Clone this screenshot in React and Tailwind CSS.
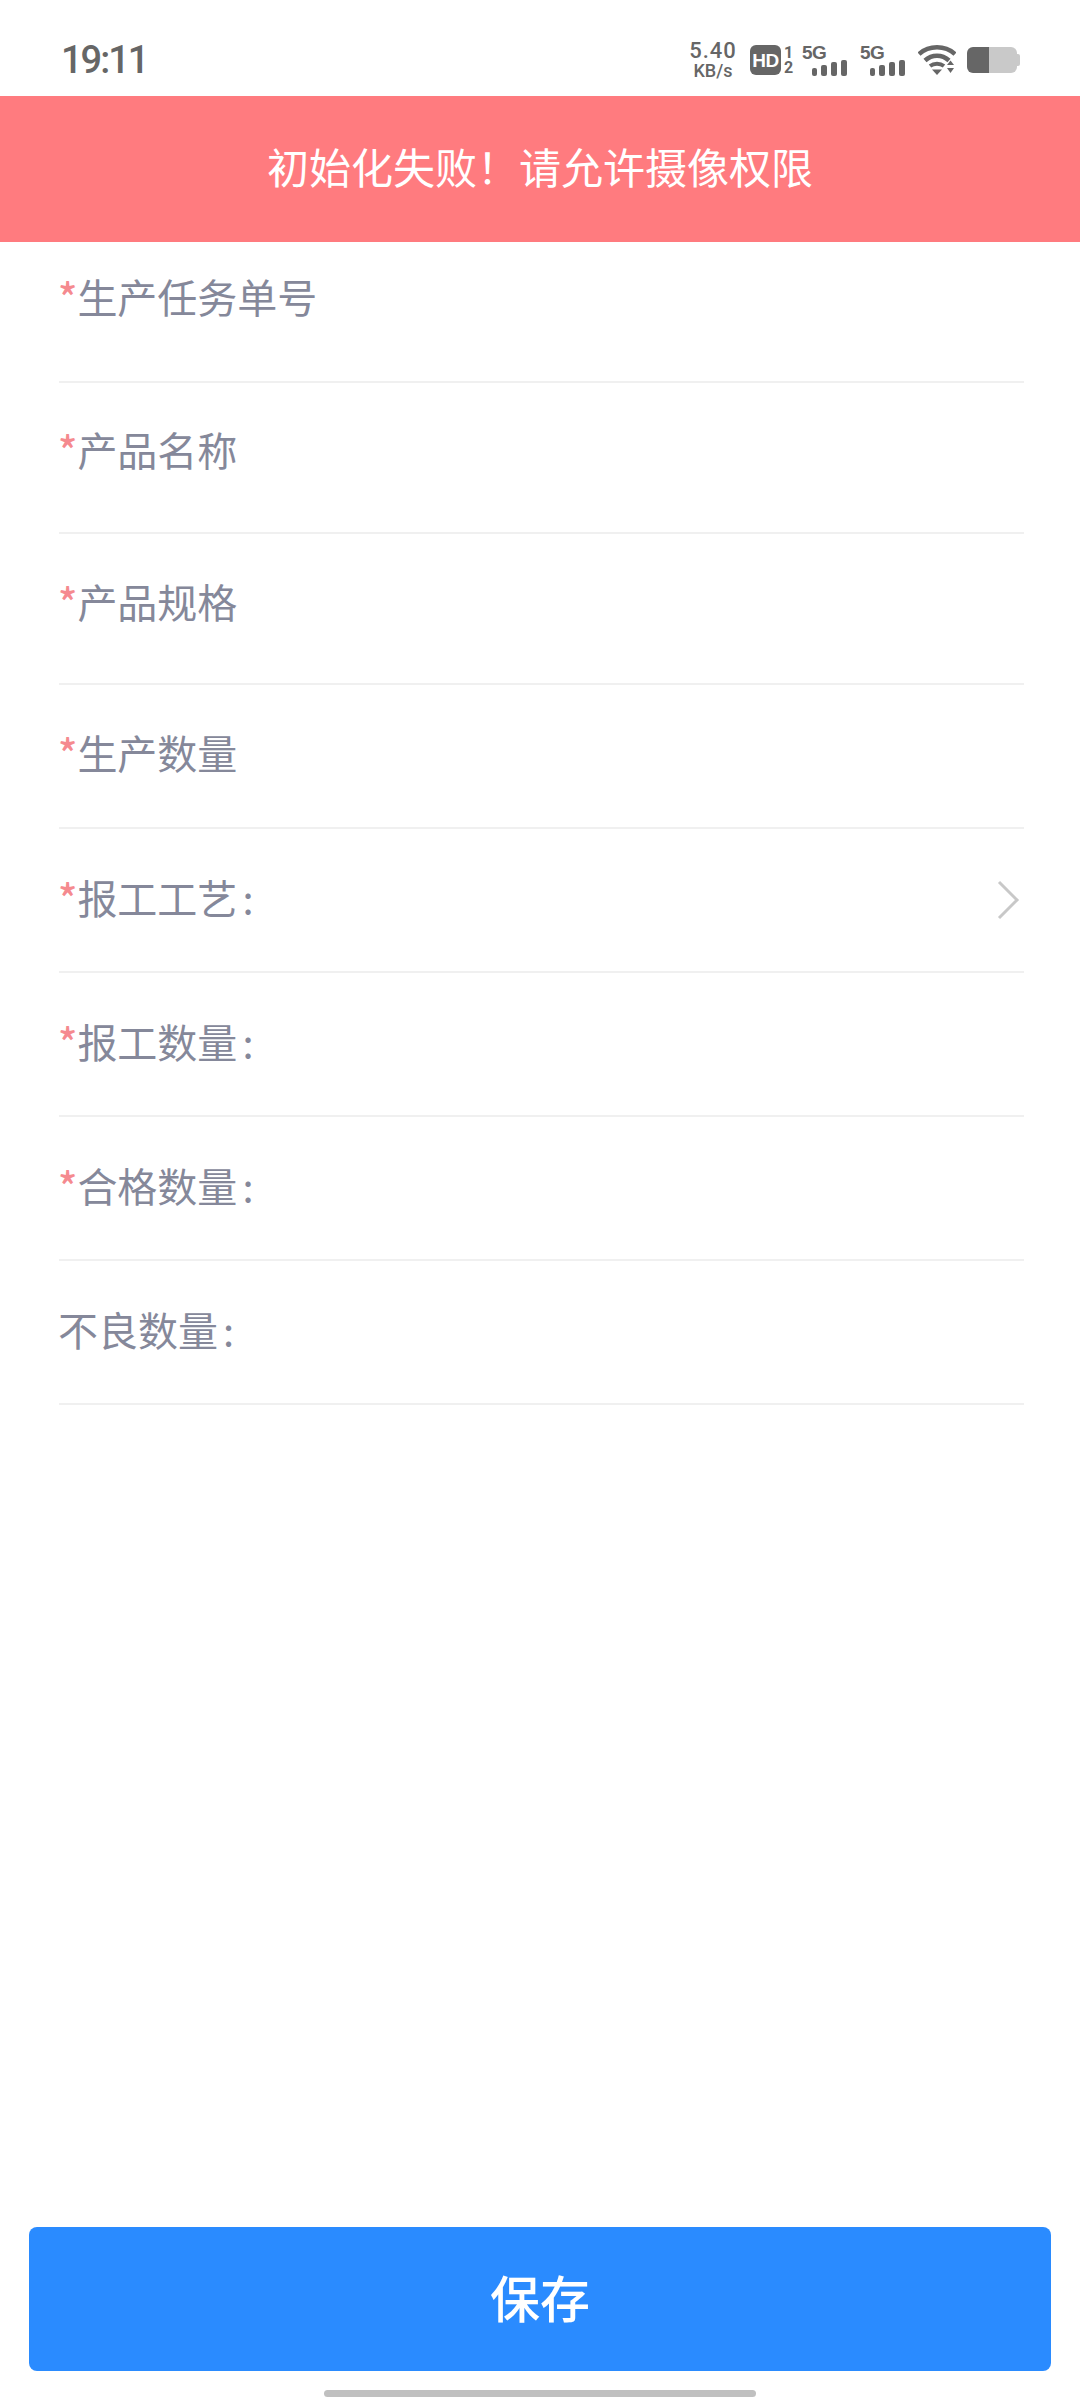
const cjk = "font-['Noto_Sans_CJK_SC',sans-serif]"

const rows = [
  { label: '生产任务单号', required: true, box: 'h-[141px] pb-[31px]' },
  { label: '产品名称', required: true, box: 'h-[151px] pb-[18px]' },
  { label: '产品规格', required: true, box: 'h-[151px] pb-[16px]' },
  { label: '生产数量', required: true, box: 'h-[144px] pb-[8px]' },
  { label: '报工工艺', colon: true, required: true, box: 'h-[144px] pb-[6px]', arrow: true },
  { label: '报工数量', colon: true, required: true, box: 'h-[144px] pb-[6px]' },
  { label: '合格数量', colon: true, required: true, box: 'h-[144px] pb-[6px]' },
  { label: '不良数量', colon: true, required: false, box: 'h-[144px] pb-[6px]' },
]

function Signal() {
  return (
    <div className="flex flex-col w-[45px]">
      <span className="font-['Liberation_Sans',sans-serif] font-bold text-[19px] leading-[15px] text-[#666666] tracking-[-0.5px]">5G</span>
      <div className="flex items-end gap-[4px] h-[16px] pl-[10px]">
        <div className="w-[5px] h-[8px] rounded-[2px] bg-[#666666]" />
        <div className="w-[6px] h-[11px] rounded-[2px] bg-[#666666]" />
        <div className="w-[6px] h-[14px] rounded-[2px] bg-[#666666]" />
        <div className="w-[6px] h-[16px] rounded-[2px] bg-[#666666]" />
      </div>
    </div>
  )
}

function Wifi() {
  return (
    <svg width="38" height="30" viewBox="0 0 38 30" fill="none">
      <path d="M1 9 C11 0 27 0 37 9" stroke="#666666" strokeWidth="4.5" />
      <path d="M7 15.5 C14 9 24 9 31 15.5" stroke="#666666" strokeWidth="4.5" />
      <path d="M12 21 C16 18 22 18 26 21" stroke="#666666" strokeWidth="4" />
      <path d="M14 24.5 H24 L19 30 Z" fill="#666666" />
      <path d="M29 20 L32.5 15.5 L36 20 Z" fill="#666666" />
      <path d="M29 23 H36 L32.5 28 Z" fill="#666666" />
    </svg>
  )
}

function Battery() {
  return (
    <div className="flex items-center">
      <div className="flex h-[26px] w-[50px] rounded-[6px] overflow-hidden">
        <div className="w-[22px] bg-[#666666]" />
        <div className="flex-1 bg-[#c9c9c9]" />
      </div>
      <div className="w-[3px] h-[12px] rounded-r-[2px] bg-[#c9c9c9]" />
    </div>
  )
}

function StatusBar() {
  return (
    <div className="h-[96px] flex items-center justify-between pl-[61px] pr-[60px] pt-[24px]">
      <span className="font-['Roboto',sans-serif] font-medium text-[38px] leading-none tracking-[-2px] text-[#666666]">19:11</span>
      <div className="flex items-center">
        <div className="flex flex-col items-center w-[50px] font-['Roboto',sans-serif] font-medium text-[#666666]">
          <span className="text-[22px] leading-[22px] tracking-[1px]">5.40</span>
          <span className="text-[18px] leading-[18px]">KB/s</span>
        </div>
        <div className="ml-[12px] flex h-[30px] w-[31px] items-center justify-center rounded-[6px] bg-[#666666] font-['Liberation_Sans',sans-serif] font-bold text-[19px] leading-none tracking-[-0.5px] text-white">HD</div>
        <div className="ml-[2px] flex flex-col items-center w-[11px] font-['Roboto',sans-serif] font-bold text-[#666666] text-[16px] leading-[15px]">
          <span>1</span>
          <span>2</span>
        </div>
        <div className="ml-[8px]"><Signal /></div>
        <div className="ml-[13px]"><Signal /></div>
        <div className="ml-[13px]"><Wifi /></div>
        <div className="ml-[11px]"><Battery /></div>
      </div>
    </div>
  )
}

export default function App() {
  return (
    <div className={`${cjk} flex flex-col h-[2400px] w-[1080px] bg-white`}>
      <StatusBar />
      <div className="h-[146px] flex items-center justify-center pb-[7px] bg-[#ff7b7f] text-white text-[42px]">
        初始化失败！请允许摄像权限
      </div>
      <div className="pl-[59px] pr-[56px]">
        {rows.map(r => (
          <div key={r.label} className={`${r.box} flex items-center justify-between border-b-2 border-[#f0f0f0]`}>
            <div className="-ml-[1px] flex items-center text-[40px] text-[#85889a]">
              {r.required && <span className="text-[#f58a8f] font-medium">*</span>}
              <span>{r.label}</span>
              {r.colon && <span className="ml-[5px]">:</span>}
            </div>
            {r.arrow && (
              <svg width="24" height="40" viewBox="0 0 24 40" fill="none" className="mr-[4px] mt-[6px]">
                <path d="M3 2 L21 20 L3 38" stroke="#c8c8c8" strokeWidth="3" />
              </svg>
            )}
          </div>
        ))}
      </div>
      <button className="mt-auto mx-[29px] h-[144px] pb-[6px] rounded-[8px] bg-[#2a8bff] text-white text-[50px] font-medium">
        保存
      </button>
      <div className="mt-[19px] mb-[3px] mx-auto h-[7px] w-[432px] rounded-full bg-[#c0c0c0]" />
    </div>
  )
}
